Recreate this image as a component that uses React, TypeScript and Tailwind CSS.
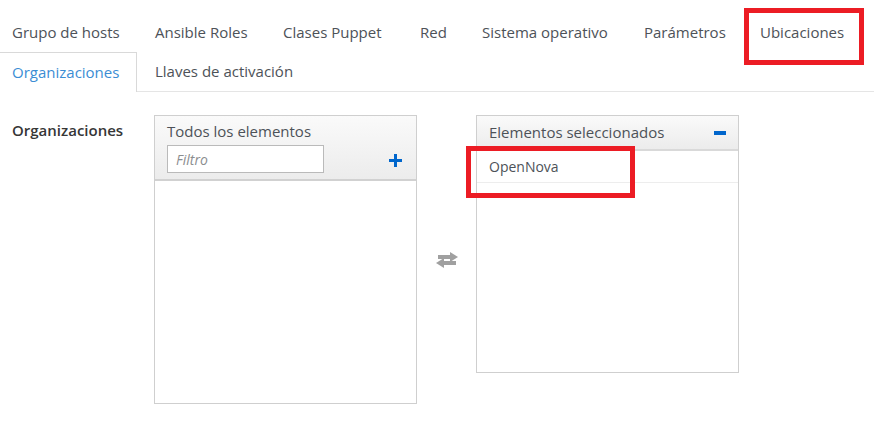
const font = { fontFamily: '"Open Sans", "Liberation Sans", sans-serif' };

type Tab = { label: string; width: string; active?: boolean; marked?: boolean };

const tabs: Tab[] = [
  { label: "Grupo de hosts", width: "w-[137px]" },
  { label: "Ansible Roles", width: "w-[122px]" },
  { label: "Clases Puppet", width: "w-[131px]" },
  { label: "Red", width: "w-[56px]" },
  { label: "Sistema operativo", width: "w-[156px]" },
  { label: "Parámetros", width: "w-[110px]" },
  { label: "Ubicaciones", width: "w-[116px]", marked: true },
  { label: "Organizaciones", width: "w-[137px]", active: true },
  { label: "Llaves de activación", width: "w-[170px]" },
];

const TabItem = ({ tab }: { tab: Tab }) => {
  if (tab.active) {
    return (
      <li className={`${tab.width} mr-[6px] -mb-px h-[40px] flex items-center pl-3 bg-white border-t border-r border-[#d9d9d9] text-[#3b8dd4]`}>
        {tab.label}
      </li>
    );
  }
  return (
    <li className={`${tab.width} mr-[6px] h-[39px] flex items-center pl-3 text-[#4d5258] relative`}>
      {tab.label}
      {tab.marked && (
        <span className="absolute left-[-4px] top-[-5px] w-[120px] h-[57px] border-[5px] border-[#ec1c24]" />
      )}
    </li>
  );
};

const Plus = () => (
  <svg width="13" height="13" viewBox="0 0 13 13">
    <rect x="5" y="0" width="3" height="13" fill="#0066cc" />
    <rect x="0" y="5" width="13" height="3" fill="#0066cc" />
  </svg>
);

const Minus = () => <span className="block w-3 h-[4px] bg-[#0066cc]" />;

const Swap = () => (
  <svg width="26" height="16" viewBox="0 0 26 16" fill="#a0a0a0">
    <rect x="4" y="3" width="14" height="4" />
    <polygon points="16,0 24,5 16,10" />
    <rect x="9" y="9" width="13" height="4" />
    <polygon points="10,6 2,11 10,16" />
  </svg>
);

export default function App() {
  return (
    <div className="w-[874px] h-[441px] bg-white text-[15px] overflow-hidden" style={font}>
      <ul className="flex flex-wrap pt-[13px] border-b border-[#e5e5e5]">
        {tabs.map((t) => (
          <TabItem key={t.label} tab={t} />
        ))}
      </ul>

      <div className="flex pt-[23px]">
        <div className="w-[154px] pl-3 pt-[4px] font-semibold text-[#363636]">Organizaciones</div>

        <div className="w-[263px] h-[289px] border border-[#cfcfcf] flex flex-col">
          <div className="h-[65px] bg-gradient-to-b from-[#fafafa] to-[#ececec] border-b-2 border-[#d1d1d1] px-3 pt-[5px]">
            <div className="text-[#4d5258] leading-5">Todos los elementos</div>
            <div className="flex items-center justify-between mt-[4px]">
              <div className="w-[157px] h-[28px] border border-[#bababa] bg-white flex items-center px-2 text-[14px] italic text-[#8b8d8f]">
                Filtro
              </div>
              <span className="mr-[2px] mt-[2px]">
                <Plus />
              </span>
            </div>
          </div>
          <div className="flex-1" />
        </div>

        <div className="w-[59px] flex items-center justify-center">
          <Swap />
        </div>

        <div className="w-[263px] h-[258px] border border-[#cfcfcf] flex flex-col">
          <div className="h-[35px] bg-gradient-to-b from-[#fafafa] to-[#ececec] border-b-2 border-[#d9d9d9] px-3 flex items-center justify-between">
            <span className="text-[#4d5258]">Elementos seleccionados</span>
            <Minus />
          </div>
          <div className="relative h-[32px] border-b border-[#ededed] flex items-center px-3 text-[14px] text-[#4d5258]">
            OpenNova
            <span className="absolute left-[-11px] top-[-5px] w-[169px] h-[52px] border-[5px] border-[#ec1c24]" />
          </div>
        </div>
      </div>
    </div>
  );
}
